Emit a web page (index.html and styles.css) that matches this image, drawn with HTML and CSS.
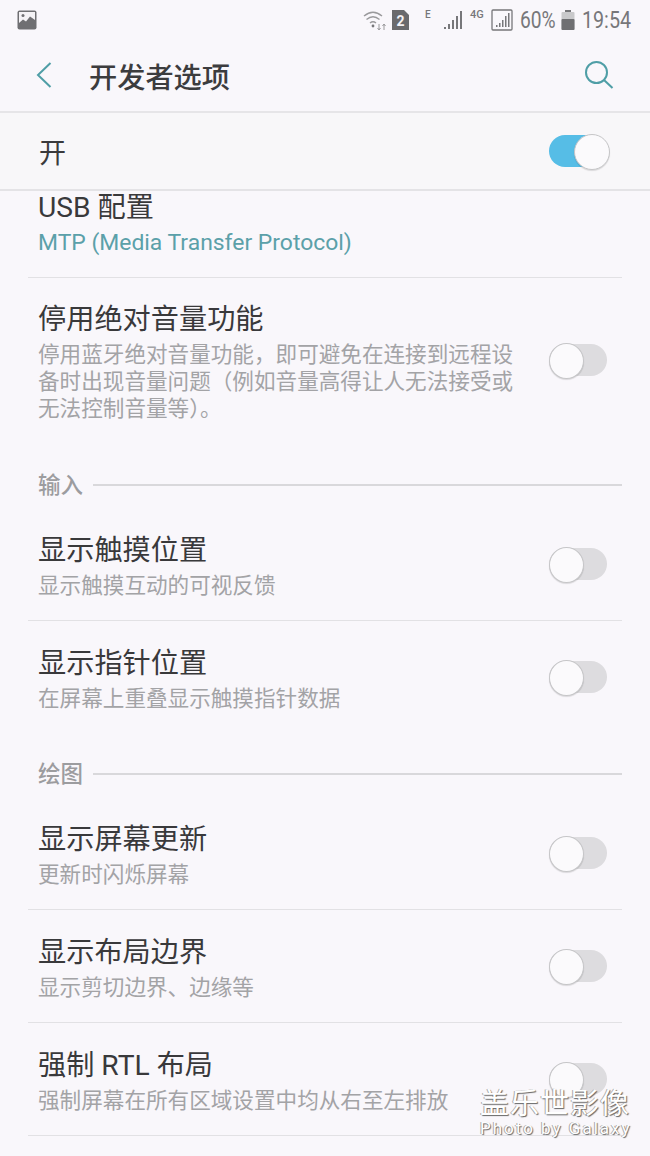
FILE: index.html
```html
<!DOCTYPE html>
<html lang="zh-CN">
<head>
  <meta charset="UTF-8">
  <title>开发者选项</title>
  <meta name="viewport" content="width=device-width, initial-scale=1.0">
  <link rel="stylesheet" href="styles.css">
</head>
<body>
  <div class="phone">
    <!-- 状态栏 -->
    <div class="status-bar">
      <svg class="ic-photo" width="20" height="20" viewBox="0 0 20 20">
        <rect x="0.5" y="0.5" width="19" height="19" rx="2" fill="#6f6f72"/>
        <rect x="2" y="2" width="16" height="14" fill="#f4f2f5"/>
        <circle cx="6" cy="5.5" r="1.5" fill="#6f6f72"/>
        <path d="M2 13 L6 9.5 L9 11.5 L13 6.5 L18 10 V17 H2 Z" fill="#6f6f72"/>
      </svg>
      <div class="status-right">
        <svg class="ic-wifi" width="24" height="20" viewBox="0 0 24 20" fill="none" stroke="#9a9a9c" stroke-width="1.4">
          <path d="M1 6 Q10 -1.500 19 6"/>
          <path d="M3.500 9.500 Q10 4 16.500 9.500"/>
          <path d="M7 13 Q10 10.500 13 13"/>
          <circle cx="10" cy="16" r="1.400" fill="#77777a" stroke="none"/>
          <path d="M16 14 V20 M14.500 18 L16 20 L17.500 18 M21 20 V14 M19.500 16 L21 14 L22.500 16" stroke-width="1"/>
        </svg>
        <svg class="ic-sim" width="17" height="20" viewBox="0 0 17 20">
          <path d="M0 0 H12 L17 5 V20 H0 Z" fill="#6a6a6d"/>
          <text x="8.500" y="15.500" text-anchor="middle" class="sim-num">2</text>
        </svg>
        <span class="net-e">E</span>
        <svg class="ic-signal" width="20" height="20" viewBox="0 0 20 20" fill="#77777a">
          <rect x="0" y="17" width="2" height="2"/>
          <rect x="4" y="14" width="2" height="5"/>
          <rect x="8" y="10" width="2" height="9"/>
          <rect x="12" y="6" width="2" height="13"/>
          <rect x="16" y="1" width="2" height="18"/>
        </svg>
        <span class="net-4g">4G</span>
        <svg class="ic-signal-box" width="22" height="22" viewBox="0 0 22 22" fill="#77777a">
          <rect x="1" y="1" width="20" height="20" rx="1" fill="none" stroke="#77777a" stroke-width="1.300"/>
          <rect x="5" y="16" width="1.500" height="2"/>
          <rect x="8" y="14" width="1.500" height="4"/>
          <rect x="11" y="11" width="1.500" height="7"/>
          <rect x="14" y="7" width="1.500" height="11"/>
          <rect x="17" y="4" width="1.500" height="14"/>
        </svg>
        <span class="pct">60%</span>
        <svg class="ic-battery" width="14" height="20" viewBox="0 0 14 20">
          <rect x="4" y="0" width="6" height="2" fill="#77777a"/>
          <rect x="0.500" y="2" width="13" height="18" rx="1" fill="#c9c9cb"/>
          <rect x="0.500" y="9" width="13" height="11" rx="1" fill="#6f6f72"/>
        </svg>
        <span class="clock">19:54</span>
      </div>
    </div>

    <!-- 标题栏 -->
    <header class="app-bar">
      <svg class="ic-back" width="16" height="26" viewBox="0 0 16 26" fill="none" stroke="#4f9ea6" stroke-width="2">
        <path d="M14.500 1 L2 13 L14.500 25"/>
      </svg>
      <h1>开发者选项</h1>
      <svg class="ic-search" width="30" height="30" viewBox="0 0 30 30" fill="none" stroke="#4f9ea6" stroke-width="2">
        <circle cx="12.500" cy="12.500" r="10.500"/>
        <path d="M20 20 L28.500 28"/>
      </svg>
    </header>

    <div class="master-row">
      <span>开</span>
      <span class="switch on"></span>
    </div>

    <!-- 设置列表 -->
    <main class="list">
      <div class="item item-usb">
        <div class="item-text">
          <div class="item-title">USB 配置</div>
          <div class="item-value">MTP (Media Transfer Protocol)</div>
        </div>
      </div>
      <div class="item item-long last">
        <div class="item-text">
          <div class="item-title">停用绝对音量功能</div>
          <div class="item-sub">停用蓝牙绝对音量功能，即可避免在连接到远程设备时出现音量问题（例如音量高得让人无法接受或无法控制音量等）。</div>
        </div>
        <span class="switch"></span>
      </div>

      <div class="section"><span>输入</span><i></i></div>
      <div class="item">
        <div class="item-text">
          <div class="item-title">显示触摸位置</div>
          <div class="item-sub">显示触摸互动的可视反馈</div>
        </div>
        <span class="switch"></span>
      </div>
      <div class="item last">
        <div class="item-text">
          <div class="item-title">显示指针位置</div>
          <div class="item-sub">在屏幕上重叠显示触摸指针数据</div>
        </div>
        <span class="switch"></span>
      </div>

      <div class="section"><span>绘图</span><i></i></div>
      <div class="item">
        <div class="item-text">
          <div class="item-title">显示屏幕更新</div>
          <div class="item-sub">更新时闪烁屏幕</div>
        </div>
        <span class="switch"></span>
      </div>
      <div class="item">
        <div class="item-text">
          <div class="item-title">显示布局边界</div>
          <div class="item-sub">显示剪切边界、边缘等</div>
        </div>
        <span class="switch"></span>
      </div>
      <div class="item">
        <div class="item-text">
          <div class="item-title">强制 RTL 布局</div>
          <div class="item-sub">强制屏幕在所有区域设置中均从右至左排放</div>
        </div>
        <span class="switch"></span>
      </div>
    </main>

    <!-- 水印 -->
    <div class="watermark">
      <div class="wm-cn">盖乐世影像</div>
      <div class="wm-en">Photo by Galaxy</div>
    </div>
  </div>
</body>
</html>
```

FILE: styles.css
```css
* {
  margin: 0;
  padding: 0;
  box-sizing: border-box;
}
html, body {
  width: 650px;
  height: 1156px;
  overflow: hidden;
}
body {
  background: #f9f7fb;
  font-family: Roboto, "Noto Sans CJK SC", sans-serif;
  color: #3a3a3c;
}
.phone {
  position: relative;
  width: 650px;
  height: 1156px;
  overflow: hidden;
}

/* status bar */
.status-bar {
  height: 41px;
  padding: 0 18px 2px 17px;
  display: flex;
  align-items: center;
  justify-content: space-between;
}
.status-right {
  display: flex;
  align-items: center;
  color: #77777a;
}
.ic-wifi { margin-right: 5px; }
.sim-num {
  font: bold 14px Roboto, sans-serif;
  fill: #f4f2f5;
}
.net-e {
  width: 7px;
  font-size: 10px;
  font-weight: 500;
  margin: -10px 12px 0 16px;
}
.net-4g {
  width: 15px;
  font-size: 11px;
  font-weight: 500;
  margin: -10px 6px 0 6px;
}
.pct {
  width: 36px;
  margin-left: 7px;
  font-size: 24px;
  white-space: nowrap;
  transform: scaleX(0.8);
  transform-origin: left;
}
.ic-battery { margin: 0 7px 0 5px; }
.clock {
  width: 50px;
  font-size: 24px;
  white-space: nowrap;
  transform: scaleX(0.82);
  transform-origin: left;
}

/* title bar */
.app-bar {
  height: 72px;
  padding: 0 37px 2px 36px;
  display: flex;
  align-items: center;
  border-bottom: 2px solid #e6e5e8;
}
.app-bar h1 {
  font-size: 28.200px;
  font-weight: 500;
  margin-left: 37px;
  flex: 1;
  color: #3c3c3e;
}
.ic-search { margin-right: -1px; }

.master-row {
  height: 78px;
  padding: 0 42px 0 39px;
  display: flex;
  align-items: center;
  justify-content: space-between;
  font-size: 27px;
  background: #f8f7f9;
  border-bottom: 2px solid #e4e3e6;
}

/* switch */
.switch {
  position: relative;
  display: block;
  flex: none;
  width: 58px;
  height: 32px;
  border-radius: 16px;
  background: #dddcdf;
}
.switch::after {
  content: "";
  position: absolute;
  left: 0;
  top: -1px;
  width: 33px;
  height: 34px;
  border-radius: 50%;
  background: #fbfafc;
  border: 1px solid #c6c6c8;
  box-shadow: 0 1px 1px rgba(0, 0, 0, 0.12);
}
.switch.on {
  width: 59px;
  background: #56bde6;
}
.switch.on::after {
  left: 25px;
  width: 34px;
}

/* list */
.list {
  padding: 0 28px;
}
.item {
  height: 113px;
  padding: 0 15px 0 10px;
  display: flex;
  align-items: center;
  justify-content: space-between;
  border-bottom: 1px solid #e2e1e4;
}
.item.last {
  height: 116px;
  padding-bottom: 5px;
  border-bottom: none;
}
.item-usb {
  height: 87px;
  padding-top: 1px;
  align-items: flex-start;
}
.item-long.last {
  height: 170px;
  padding-bottom: 0;
}
.item-long .switch {
  margin-top: -6px;
}
.item-text {
  min-width: 0;
  margin-top: 6px;
}
.item-usb .item-text,
.item-long .item-text {
  margin-top: 0;
}
.item-title {
  font-size: 28.200px;
  line-height: 32px;
  color: #39393b;
}
.item-sub {
  width: 480px;
  margin-top: 5px;
  font-size: 21.600px;
  line-height: 27px;
  color: #a3a3a6;
}
.item-value {
  margin-top: 4px;
  font-size: 22.900px;
  line-height: 30px;
  color: #5ba0a9;
}
.section {
  height: 47px;
  padding-left: 10px;
  margin-top: 13px;
  display: flex;
  align-items: center;
  gap: 10px;
  font-size: 22.500px;
  font-weight: 500;
  color: #9c9c9f;
}
.section span {
  margin-top: -4px;
}
.section i {
  flex: 1;
  height: 2px;
  background: #d9d8db;
}

/* watermark */
.watermark {
  position: absolute;
  left: 480px;
  top: 1089px;
  color: #fff;
  text-shadow: 1px 1px 1px #666, -1px 0 0 #aaa;
}
.wm-cn {
  font-size: 29px;
  line-height: 30px;
  font-weight: 400;
  letter-spacing: 1px;
  white-space: nowrap;
}
.wm-en {
  font-size: 17px;
  line-height: 18px;
  letter-spacing: 2px;
  white-space: nowrap;
}
```
